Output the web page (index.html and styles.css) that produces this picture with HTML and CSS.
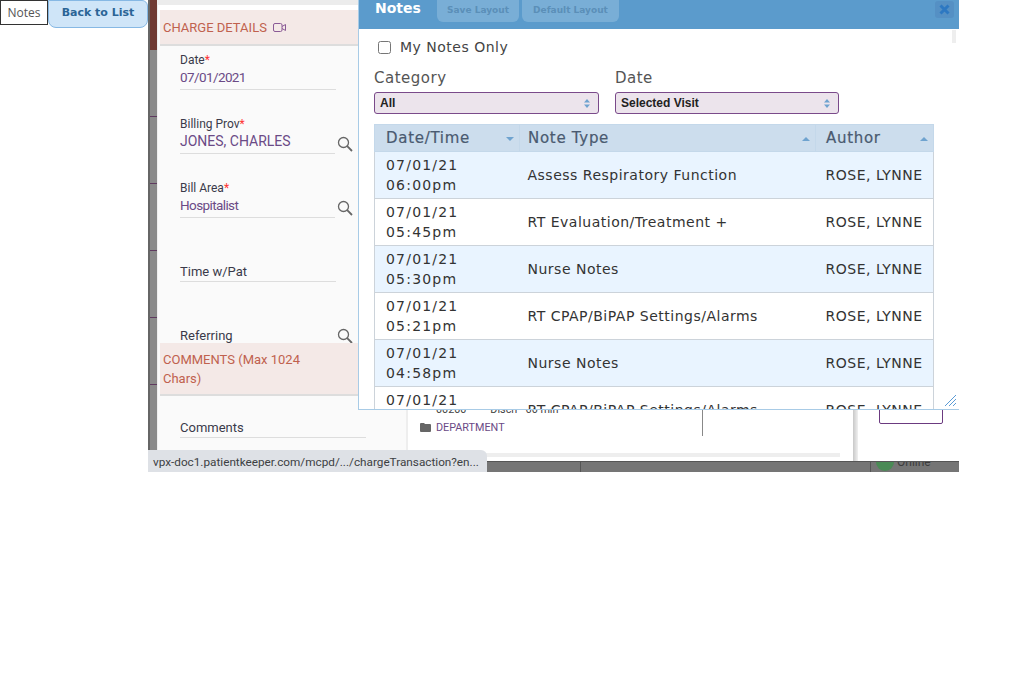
FILE: index.html
```html
<!DOCTYPE html>
<html lang="en">
<head>
    <meta charset="UTF-8">
    <meta name="viewport" content="width=device-width, initial-scale=1.0">
    <title>Notes</title>
    <link rel="stylesheet" href="styles.css">
</head>
<body>
    <div class="page">
        <div class="top-actions">
            <button type="button" class="btn-notes">Notes</button>
            <button type="button" class="btn-back">Back to List</button>
        </div>

        <div class="app">
            <div class="app-body">
                <div class="rail">
                    <div class="rail-head"></div>
                    <div class="rail-cell"></div>
                    <div class="rail-cell"></div>
                    <div class="rail-cell"></div>
                    <div class="rail-cell"></div>
                    <div class="rail-cell"></div>
                </div>

                <div class="charge">
                    <div class="charge-top"></div>
                    <div class="section-head">
                        CHARGE DETAILS
                        <svg class="video-icon" width="13" height="9" viewBox="0 0 13 9"><rect x="0.5" y="0.5" width="8.5" height="8" rx="1.5" fill="none" stroke="#8a5a96"/><path d="M9 3.5 12.5 1.5V7.5L9 5.5" fill="none" stroke="#8a5a96"/></svg>
                    </div>
                    <div class="field">
                        <div class="field-label">Date<span class="req">*</span></div>
                        <div class="field-value field-value-tight field-value-wide">07/01/2021</div>
                    </div>
                    <div class="field">
                        <div class="field-label">Billing Prov<span class="req">*</span></div>
                        <div class="field-value">JONES, CHARLES</div>
                        <svg class="search-icon" width="16" height="16" viewBox="0 0 16 16"><circle cx="6.5" cy="6.5" r="5" fill="none" stroke="#666" stroke-width="1.3"/><path d="M10.2 10.2 15 15" stroke="#666" stroke-width="1.8"/></svg>
                    </div>
                    <div class="field">
                        <div class="field-label">Bill Area<span class="req">*</span></div>
                        <div class="field-value field-value-tight">Hospitalist</div>
                        <svg class="search-icon" width="16" height="16" viewBox="0 0 16 16"><circle cx="6.5" cy="6.5" r="5" fill="none" stroke="#666" stroke-width="1.3"/><path d="M10.2 10.2 15 15" stroke="#666" stroke-width="1.8"/></svg>
                    </div>
                    <div class="field">
                        <div class="field-label field-label-only">Time w/Pat</div>
                    </div>
                    <div class="field field-short">
                        <div class="field-label field-label-only">Referring</div>
                        <svg class="search-icon" width="16" height="16" viewBox="0 0 16 16"><circle cx="6.5" cy="6.5" r="5" fill="none" stroke="#666" stroke-width="1.3"/><path d="M10.2 10.2 15 15" stroke="#666" stroke-width="1.8"/></svg>
                    </div>
                    <div class="section-head section-head-tall">COMMENTS (Max 1024 Chars)</div>
                    <div class="comments-field">Comments</div>
                </div>

                <div class="main">
                    <div class="main-rows">
                        <div class="charge-row"><span>00200</span><span>Disch - 60 min</span></div>
                        <div class="dept-row">
                            <svg width="11" height="9" viewBox="0 0 11 9"><path d="M0 1a1 1 0 0 1 1-1h3l1 1h5a1 1 0 0 1 1 1v6a1 1 0 0 1-1 1H1a1 1 0 0 1-1-1z" fill="#666"/></svg>
                            DEPARTMENT
                        </div>
                    </div>
                    <div class="main-track"></div>
                </div>
                <div class="main-edge"></div>

                <div class="side">
                    <div class="side-btn"></div>
                </div>
            </div>
            <div class="app-foot">
                <div class="foot-cell foot-wide"></div>
                <div class="foot-cell foot-mid"></div>
                <div class="foot-status"><span class="status-dot"></span>Online</div>
            </div>

            <div class="modal">
                <div class="modal-head">
                    <span class="modal-title">Notes</span>
                    <button type="button" class="btn-layout btn-save">Save Layout</button>
                    <button type="button" class="btn-layout">Default Layout</button>
                    <span class="modal-close">
                        <svg width="11" height="11" viewBox="0 0 11 11"><path d="M1.5 1.5 9.5 9.5M9.5 1.5 1.5 9.5" stroke="#2d78c2" stroke-width="3"/></svg>
                    </span>
                </div>
                <div class="modal-body">
                    <label class="my-notes"><input type="checkbox"> My Notes Only</label>
                    <div class="filters">
                        <div class="filter filter-category">
                            <div class="filter-label">Category</div>
                            <div class="select">All
                                <svg width="6" height="9" viewBox="0 0 6 9"><path d="M3 0 6 3.5H0zM3 9 0 5.5H6z" fill="#6fa3cf"/></svg>
                            </div>
                        </div>
                        <div class="filter filter-date">
                            <div class="filter-label">Date</div>
                            <div class="select">Selected Visit
                                <svg width="6" height="9" viewBox="0 0 6 9"><path d="M3 0 6 3.5H0zM3 9 0 5.5H6z" fill="#6fa3cf"/></svg>
                            </div>
                        </div>
                    </div>
                    <table class="notes-table">
                        <thead>
                            <tr>
                                <th class="col-date">Date/Time<span class="caret caret-down"></span></th>
                                <th class="col-type">Note Type<span class="caret"></span></th>
                                <th class="col-author">Author<span class="caret"></span></th>
                            </tr>
                        </thead>
                        <tbody>
                            <tr>
                                <td>07/01/21<br>06:00pm</td>
                                <td>Assess Respiratory Function</td>
                                <td>ROSE, LYNNE</td>
                            </tr>
                            <tr>
                                <td>07/01/21<br>05:45pm</td>
                                <td>RT Evaluation/Treatment +</td>
                                <td>ROSE, LYNNE</td>
                            </tr>
                            <tr>
                                <td>07/01/21<br>05:30pm</td>
                                <td>Nurse Notes</td>
                                <td>ROSE, LYNNE</td>
                            </tr>
                            <tr>
                                <td>07/01/21<br>05:21pm</td>
                                <td>RT CPAP/BiPAP Settings/Alarms</td>
                                <td>ROSE, LYNNE</td>
                            </tr>
                            <tr>
                                <td>07/01/21<br>04:58pm</td>
                                <td>Nurse Notes</td>
                                <td>ROSE, LYNNE</td>
                            </tr>
                            <tr>
                                <td>07/01/21<br>04:30pm</td>
                                <td>RT CPAP/BiPAP Settings/Alarms</td>
                                <td>ROSE, LYNNE</td>
                            </tr>
                        </tbody>
                    </table>
                    <div class="modal-thumb"></div>
                </div>
                <svg class="resize-grip" width="13" height="13" viewBox="0 0 13 13"><path d="M1 12 12 1M5 12 12 5M9 12 12 9" stroke="#5b9bd5" stroke-width="1" fill="none"/></svg>
            </div>

            <div class="status-bubble">vpx-doc1.patientkeeper.com/mcpd/.../chargeTransaction?en...</div>
        </div>
    </div>
</body>
</html>
```

FILE: styles.css
```css
body {
    margin: 0;
    padding: 0;
    background-color: #fff;
    font-family: "DejaVu Sans", sans-serif;
    color: #333;
}
.page {
    display: flex;
    align-items: flex-start;
}
.top-actions {
    display: flex;
    align-items: flex-start;
    width: 148px;
}
button {
    font-family: inherit;
    cursor: pointer;
}
.btn-notes {
    width: 48px;
    height: 25px;
    padding: 0;
    background-color: #fff;
    border: 1px solid #333;
    color: #555;
    font-family: "Open Sans", sans-serif;
    font-size: 12px;
}
.btn-back {
    width: 100px;
    height: 28px;
    padding: 0 0 3px;
    background-color: #cfe5f8;
    border: 1px solid #86b8e4;
    border-radius: 0 6px 8px 8px;
    color: #2a6496;
    font-size: 11px;
    font-weight: bold;
}

/* app behind the dialog */
.app {
    position: relative;
    width: 811px;
    height: 472px;
    overflow: hidden;
    display: flex;
    flex-direction: column;
}
.app-body {
    display: flex;
    height: 461px;
}
.rail {
    width: 7px;
    flex-shrink: 0;
    border-left: 2px solid #666;
    border-right: 1px solid #eee;
    background-color: #8a8a8a;
}
.rail-head {
    height: 50px;
    background-color: #6f3a33;
}
.rail-cell {
    height: 66px;
    border-bottom: 1px solid #5f3a5f;
}
.charge {
    width: 250px;
    flex-shrink: 0;
    box-sizing: border-box;
    border-right: 2px solid #eee;
    background-color: #fafafa;
    font-family: Roboto, sans-serif;
}
.charge-top {
    height: 5px;
    background-color: #ececec;
    border-bottom: 5px solid #fff;
}
.section-head {
    display: flex;
    align-items: center;
    height: 36px;
    box-sizing: border-box;
    padding: 0 0 2px 3px;
    margin-left: 2px;
    box-shadow: inset 0 -2px 0 #ddd;
    background-color: #f4e9e7;
    color: #c0614e;
    font-size: 13px;
}
.video-icon {
    margin-left: 6px;
}
.field {
    position: relative;
    height: 64px;
    margin-left: 22px;
    box-sizing: border-box;
    padding-top: 7px;
}
.field-label {
    width: 156px;
    font-size: 12px;
    line-height: 14px;
    color: #3a3a4a;
}
.field-label-only {
    height: 14px;
    padding: 20px 0 2px;
    border-bottom: 1px solid #ddd;
    font-size: 13px;
}
.req {
    color: #f33;
}
.field-value {
    width: 155px;
    height: 22px;
    border-bottom: 1px solid #ddd;
    color: #6b4a86;
    font-size: 14px;
    line-height: 20px;
}
.field-value-tight {
    font-size: 13.5px;
    letter-spacing: -0.6px;
}
.field-value-wide {
    width: 156px;
}
.search-icon {
    position: absolute;
    left: 157px;
    top: 26px;
}
.field-short {
    height: 41px;
}
.section-head-tall {
    position: relative;
    display: block;
    height: 53px;
    padding: 7px 100px 0 3px;
    line-height: 19px;
}
.comments-field {
    margin: 24px 0 0 22px;
    width: 186px;
    height: 16px;
    padding-top: 1px;
    border-bottom: 1px solid #ddd;
    font-size: 13px;
    line-height: 14px;
    color: #3a3a4a;
}
.main {
    width: 445px;
    flex-shrink: 0;
    box-sizing: border-box;
    padding-top: 400px;
    background-color: #fff;
    color: #6b4a86;
    font-family: Roboto, sans-serif;
    font-size: 10.8px;
}
.main-rows {
    width: 282px;
    height: 36px;
    margin-left: 12px;
    border-right: 1px solid #888;
}
.charge-row {
    display: flex;
    gap: 24px;
    height: 14px;
    margin: 0 0 6px 16px;
    line-height: 19px;
    color: #444;
}
.dept-row {
    display: flex;
    align-items: center;
    gap: 5px;
    height: 14px;
}
.main-track {
    height: 4px;
    width: 432px;
    margin-top: 17px;
    background-color: #eee;
}
.main-edge {
    width: 5px;
    flex-shrink: 0;
    background: linear-gradient(to right, #c8c8c8, #f0f0f0);
}
.side {
    flex: 1;
    background-color: #fff;
}
.side-btn {
    width: 64px;
    height: 424px;
    margin-left: 21px;
    box-sizing: border-box;
    border: 1px solid #6b3a80;
    border-radius: 2px;
}
.app-foot {
    display: flex;
    height: 11px;
    overflow: hidden;
    background-color: #757575;
    border-top: 1px solid #555;
    box-sizing: border-box;
}
.foot-cell {
    flex-shrink: 0;
    border-right: 1px solid #555;
}
.foot-wide {
    width: 432px;
}
.foot-mid {
    width: 289px;
}
.foot-status {
    position: relative;
    padding-left: 26px;
    font-family: Roboto, sans-serif;
    font-size: 12px;
    line-height: 0;
    color: #3c3c3c;
}
.status-dot {
    position: absolute;
    left: 5px;
    top: -9px;
    width: 18px;
    height: 18px;
    border-radius: 50%;
    background-color: #4a8a55;
}

/* notes dialog */
.modal {
    position: absolute;
    left: 210px;
    top: 0;
    width: 601px;
    height: 410px;
    box-sizing: border-box;
    border-left: 1px solid #a8cbe6;
    border-bottom: 1px solid #a8cbe6;
    background-color: #fff;
    overflow: hidden;
}
.modal-head {
    display: flex;
    align-items: flex-start;
    height: 29px;
    padding-left: 16px;
    background-color: #5b9bcc;
}
.modal-title {
    width: 62px;
    color: #fff;
    font-size: 14px;
    font-weight: bold;
    line-height: 17px;
}
.btn-layout {
    height: 22px;
    width: 97px;
    margin-right: 3px;
    padding: 0 0 3px;
    background-color: #79aed6;
    border: none;
    border-radius: 0 0 6px 6px;
    color: #5b8fb8;
    font-size: 9px;
    font-weight: bold;
}
.btn-save {
    width: 82px;
}
.modal-close {
    display: flex;
    align-items: center;
    justify-content: center;
    width: 19px;
    height: 17px;
    margin: 1px 5px 0 auto;
    background-color: #5590c4;
    border-radius: 3px;
}
.modal-body {
    position: relative;
    height: 380px;
    overflow: hidden;
    padding: 0 15px;
}
.my-notes {
    display: flex;
    align-items: center;
    height: 18px;
    padding: 9px 0 0 4px;
    color: #444;
    font-size: 14px;
    letter-spacing: 0.5px;
}
.my-notes input {
    margin: 0 9px 0 0;
    width: 13px;
    height: 13px;
}
.filters {
    display: flex;
    gap: 16px;
    margin-top: 13px;
}
.filter-category {
    width: 225px;
}
.filter-date {
    width: 224px;
}
.filter-label {
    color: #555;
    font-size: 15px;
    letter-spacing: 0.5px;
    line-height: 18px;
}
.select {
    display: flex;
    align-items: center;
    justify-content: space-between;
    height: 22px;
    margin-top: 5px;
    box-sizing: border-box;
    padding: 0 8px 0 5px;
    background-color: #ece4ec;
    border: 1px solid #7a4a8a;
    border-radius: 3px;
    color: #222;
    font-family: "Liberation Sans", sans-serif;
    font-size: 12px;
    font-weight: bold;
}
.notes-table {
    width: 560px;
    margin-top: 10px;
    table-layout: fixed;
    border-collapse: collapse;
    font-size: 14px;
    letter-spacing: 0.5px;
}
.notes-table th {
    position: relative;
    height: 27px;
    box-sizing: border-box;
    padding: 0 0 0 8px;
    background-color: #ccdded;
    border: 1px solid #c4d8ea;
    color: #4a5a70;
    font-size: 15px;
    font-weight: normal;
    letter-spacing: 0.7px;
    text-align: left;
    -webkit-text-stroke: 0.2px #4a5a70;
}
th.col-date {
    width: 145px;
    padding-left: 11px;
}
th.col-author {
    width: 118px;
    padding-left: 10px;
}
.notes-table td {
    height: 47px;
    box-sizing: border-box;
    padding: 0 0 0 8px;
    border: 1px solid #ccd3da;
    border-top: none;
    border-left: none;
    border-right: none;
    line-height: 20px;
    color: #333;
}
.notes-table td:first-child {
    padding: 0 0 0 11px;
    border-left: 1px solid #ccd3da;
    letter-spacing: 1.2px;
}
.notes-table td:last-child {
    padding-left: 10px;
    border-right: 1px solid #ccd3da;
}
.notes-table tbody tr:nth-child(odd) td {
    background-color: #e9f4ff;
}
.caret {
    position: absolute;
    right: 5px;
    top: 12px;
    border-left: 4px solid transparent;
    border-right: 4px solid transparent;
    border-bottom: 4px solid #6fa3cf;
}
.caret-down {
    border-bottom: none;
    border-top: 4px solid #6fa3cf;
}
.modal-thumb {
    position: absolute;
    right: 3px;
    top: 1px;
    width: 4px;
    height: 13px;
    background-color: #eee;
}
.resize-grip {
    position: absolute;
    right: 2px;
    bottom: 2px;
}
.status-bubble {
    position: absolute;
    left: 0;
    bottom: 0;
    width: 339px;
    height: 22px;
    box-sizing: border-box;
    padding-left: 5px;
    background-color: #dee1e6;
    border-top-right-radius: 6px;
    color: #3c4043;
    font-family: Roboto, sans-serif;
    font-size: 11.75px;
    line-height: 24px;
    white-space: nowrap;
}
```
